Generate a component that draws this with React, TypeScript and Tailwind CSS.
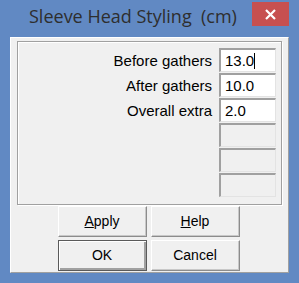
import React from "react";

const rows = [
  { label: "Before gathers", value: "13.0", caret: true },
  { label: "After gathers", value: "10.0" },
  { label: "Overall extra", value: "2.0" },
  { label: "", value: "", disabled: true },
  { label: "", value: "", disabled: true },
  { label: "", value: "", disabled: true },
];

function Field({ value, disabled, caret }: { value: string; disabled?: boolean; caret?: boolean }) {
  return (
    <div
      className={`w-[57px] h-[24px] border-t-2 border-l-2 border-r border-b border-t-[#a0a0a0] border-l-[#a0a0a0] border-r-[#e3e3e3] border-b-[#e3e3e3] flex items-center pl-[4px] ${
        disabled ? "bg-[#f0f0f0]" : "bg-white"
      }`}
    >
      <span className="text-[15px] leading-none text-black">{value}</span>
      {caret && <span className="w-px h-[16px] bg-black" />}
    </div>
  );
}

function Btn({ children, def }: { children: React.ReactNode; def?: boolean }) {
  return (
    <div
      className={`w-[89px] h-[31px] flex items-center justify-center text-[14px] text-black bg-[#f0f0f0] border ${
        def
          ? "border-[#5a5a5a] shadow-[inset_1px_1px_0_#ffffff,inset_-2px_-2px_0_#a0a0a0]"
          : "border-t-white border-l-white border-r-[#8c8c8c] border-b-[#8c8c8c] shadow-[inset_-1px_-1px_0_#c8c8c8]"
      }`}
    >
      {children}
    </div>
  );
}

export default function App() {
  return (
    <div
      className="w-[299px] h-[283px] bg-[#6189c3] flex flex-col"
      style={{ fontFamily: "'Liberation Sans', Arial, sans-serif" }}
    >
      <div className="h-[37px] flex items-start relative">
        <div
          className="absolute left-[29px] top-[7px] text-[18px] leading-none text-[#2e2e2e]"
          style={{ fontFamily: "'Open Sans', 'Noto Sans', sans-serif" }}
        >
          Sleeve Head Styling&nbsp;&nbsp;(cm)
        </div>
        <div className="absolute left-[252px] top-[2px] w-[37px] h-[24px] bg-[#c75050] flex items-center justify-center">
          <svg width="11" height="11" viewBox="0 0 11 11">
            <path d="M1 1L10 10M10 1L1 10" stroke="white" strokeWidth="2.2" />
          </svg>
        </div>
      </div>
      <div className="mx-[10px] mb-[10px] flex-1 bg-[#f0f0f0] flex flex-col px-[6px] pt-[3px] border-t border-l border-white border-r border-b border-r-[#a0a0a0] border-b-[#a0a0a0]">
        <div className="h-[164px] border border-[#a0a0a0] shadow-[inset_1px_1px_0_#ffffff,1px_1px_0_#ffffff] flex flex-col items-end pt-[6px] pr-[5px] gap-[1px]">
          {rows.map((r, i) => (
            <div key={i} className="flex items-center gap-[7px]">
              <span className="text-[15px] leading-none text-black">{r.label}</span>
              <Field value={r.value} disabled={r.disabled} caret={r.caret} />
            </div>
          ))}
        </div>
        <div className="flex flex-col items-center gap-[3px] mt-[1px] pr-[2px]">
          <div className="flex gap-[4px]">
            <Btn>
              <span className="underline">A</span>pply
            </Btn>
            <Btn>
              <span className="underline">H</span>elp
            </Btn>
          </div>
          <div className="flex gap-[4px]">
            <Btn def>OK</Btn>
            <Btn>Cancel</Btn>
          </div>
        </div>
      </div>
    </div>
  );
}
